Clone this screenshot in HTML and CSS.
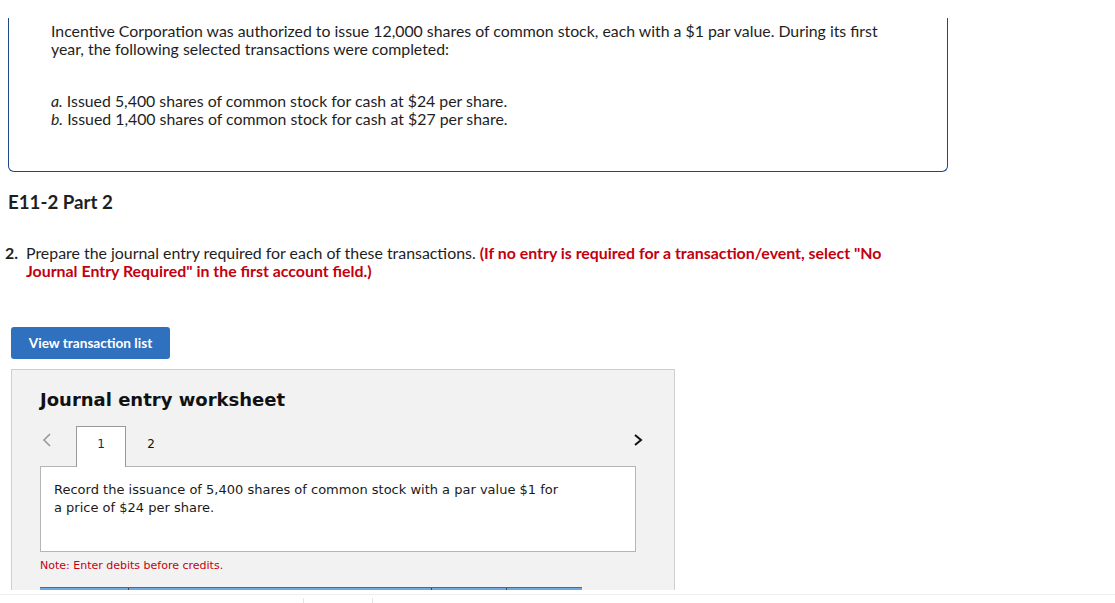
FILE: index.html
```html
<!DOCTYPE html>
<html>
<head>
<meta charset="utf-8">
<link rel="stylesheet" href="styles.css">
</head>
<body>
<div class="page">
  <div class="problem">
    <p class="intro">Incentive Corporation was authorized to issue 12,000 shares of common stock, each with a $1 par value. During its first year, the following selected transactions were completed:</p>
    <ol class="items">
      <li><span class="lbl">a.</span> Issued 5,400 shares of common stock for cash at $24 per share.</li>
      <li><span class="lbl">b.</span> Issued 1,400 shares of common stock for cash at $27 per share.</li>
    </ol>
  </div>
  <h2 class="part">E11-2 Part 2</h2>
  <div class="question">
    <span class="qnum">2.</span>
    <p class="qtext">Prepare the journal entry required for each of these transactions. <strong class="warn">(If no entry is required for a transaction/event, select "No Journal Entry Required" in the first account field.)</strong></p>
  </div>
  <button class="btn">View transaction list</button>
  <div class="worksheet">
    <h3 class="ws-title">Journal entry worksheet</h3>
    <div class="tabs">
      <span class="arrow prev">
        <svg width="10" height="16" viewBox="0 0 10 16"><path d="M8 2 L2 8 L8 14" fill="none" stroke="#9a9a9a" stroke-width="1.6"/></svg>
      </span>
      <span class="tab active">1</span>
      <span class="tab">2</span>
      <span class="spacer"></span>
      <span class="arrow next">
        <svg width="10" height="16" viewBox="0 0 10 16"><path d="M2 3 L8 8 L2 13" fill="none" stroke="#111" stroke-width="2"/></svg>
      </span>
    </div>
    <div class="desc">Record the issuance of 5,400 shares of common stock with a par value $1 for a price of $24 per share.</div>
    <p class="note">Note: Enter debits before credits.</p>
    <div class="thead">
      <span class="c1"></span><span class="c2"></span><span class="c3"></span><span class="c4"></span>
    </div>
  </div>
</div>
<div class="bottom">
  <span class="tick t1"></span><span class="tick t2"></span>
</div>
</body>
</html>
```
FILE: styles.css
```css
html, body {
  margin: 0;
  padding: 0;
  background: #fff;
}
body {
  font-family: Lato, "Open Sans", Arial, sans-serif;
  color: #1e1e1e;
}
.page {
  height: 590px;
  overflow: hidden;
}
.problem {
  margin: 18px 0 0 8px;
  width: 940px;
  height: 154px;
  box-sizing: border-box;
  border: 1px solid #1d4a86;
  border-top: none;
  border-radius: 0 0 6px 6px;
  padding: 4px 0 0 42px;
  font-size: 15.85px;
  line-height: 18px;
}
.intro {
  margin: 0;
  width: 845px;
}
.items {
  list-style: none;
  margin: 34px 0 0 0;
  padding: 0;
}
.lbl {
  font-style: italic;
}
.part {
  margin: 19px 0 0 8px;
  font-size: 18.7px;
  line-height: 22px;
  font-weight: 700;
  color: #1e1e1e;
}
.question {
  display: flex;
  margin: 31px 0 0 5px;
  font-size: 15.9px;
  line-height: 18px;
}
.qnum {
  font-weight: 700;
  width: 21px;
  flex: none;
}
.qtext {
  margin: 0;
  width: 885px;
}
.warn {
  color: #c4000f;
  font-weight: 700;
}
.btn {
  display: block;
  margin: 47px 0 0 11px;
  width: 159px;
  height: 32px;
  border: none;
  border-radius: 3px;
  background: #2f70bf;
  color: #fff;
  font-family: Lato, Arial, sans-serif;
  font-weight: 700;
  font-size: 13.6px;
  padding: 0;
}
.worksheet {
  margin: 10px 0 0 11px;
  width: 664px;
  height: 260px;
  box-sizing: border-box;
  background: #f2f2f2;
  border: 1px solid #cfcfcf;
  padding: 0 0 0 28px;
  font-family: "DejaVu Sans", Verdana, sans-serif;
}
.ws-title {
  margin: 19px 0 0 0;
  font-family: "DejaVu Sans", Verdana, sans-serif;
  font-weight: 700;
  font-size: 18px;
  line-height: 22px;
  color: #111;
}
.tabs {
  display: flex;
  align-items: flex-end;
  margin-top: 15px;
  width: 604px;
  height: 40px;
  position: relative;
  z-index: 1;
}
.arrow {
  display: flex;
  align-items: flex-start;
  height: 40px;
  padding-top: 6px;
  box-sizing: border-box;
}
.prev {
  width: 36px;
  padding-left: 2px;
}
.tab {
  width: 50px;
  height: 40px;
  box-sizing: border-box;
  display: flex;
  align-items: center;
  justify-content: center;
  font-size: 12px;
  color: #111;
  padding-bottom: 5px;
}
.tab.active {
  background: #fff;
  border: 1px solid #999;
  border-bottom: none;
  height: 41px;
  margin-bottom: -1px;
  color: #0d2a66;
  padding-bottom: 6px;
}
.spacer {
  flex: 1;
}
.next {
  width: 10px;
  margin-right: 1px;
}
.desc {
  width: 596px;
  height: 86px;
  box-sizing: border-box;
  background: #fff;
  border: 1px solid #b5b5b5;
  padding: 14px 66px 0 13px;
  font-size: 13px;
  line-height: 18px;
  color: #1a1a1a;
}
.note {
  margin: 6px 0 0 0;
  font-size: 11px;
  line-height: 16px;
  color: #c4000f;
}
.thead {
  display: flex;
  margin-top: 13px;
  width: 542px;
  height: 20px;
  background: #6fa7e0;
  border-top: 1px solid #666;
}
.thead span {
  border-left: 1px solid #444;
  height: 20px;
}
.c1 { width: 88px; border-left: none !important; }
.c2 { width: 304px; }
.c3 { width: 75px; }
.c4 { width: 75px; }
.bottom {
  position: relative;
  height: 13px;
  border-top: 1px solid #eeeeee;
  margin-top: 4px;
}
.tick {
  position: absolute;
  top: 3px;
  width: 1px;
  height: 6px;
  background: #e4e4e4;
}
.t1 { left: 303px; }
.t2 { left: 372px; }
```
